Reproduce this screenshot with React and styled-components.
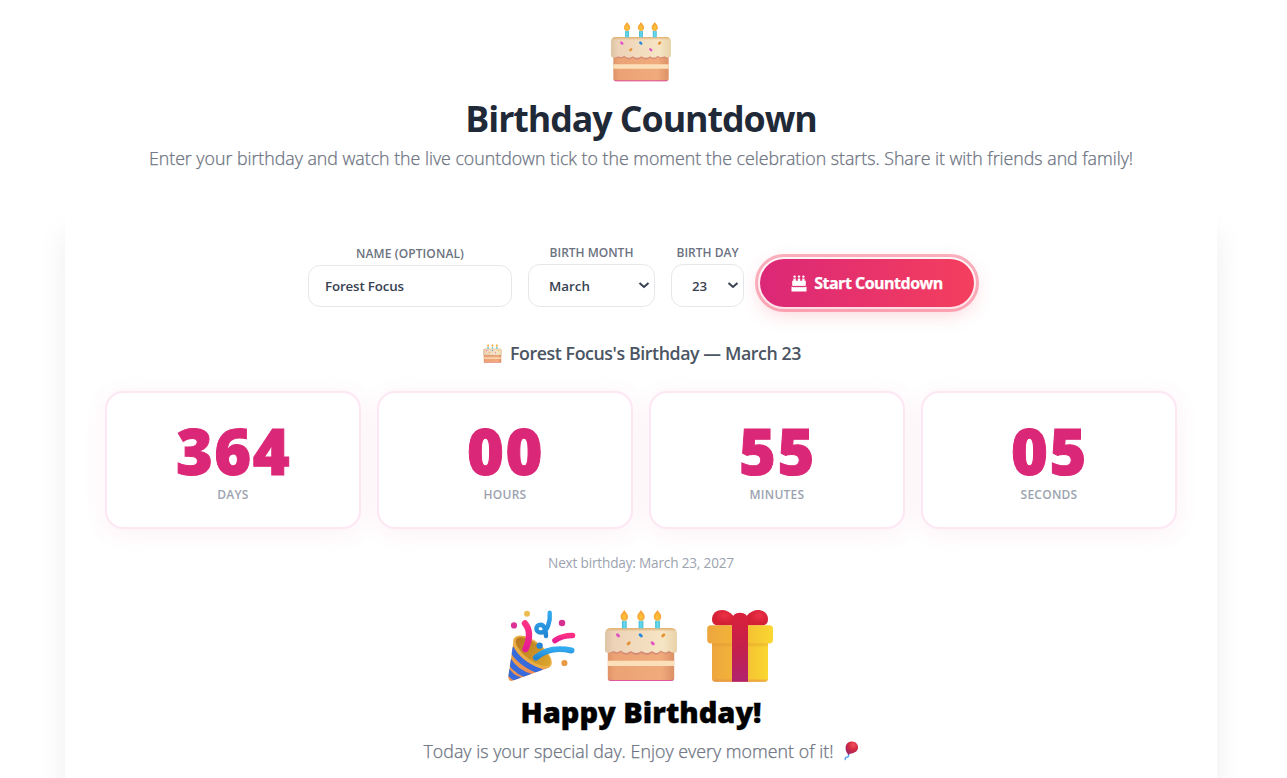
import React from 'react';
import styled, { createGlobalStyle } from 'styled-components';

const Global = createGlobalStyle`
  *, *::before, *::after { box-sizing: border-box; }
  body {
    margin: 0;
    height: 100vh;
    overflow: hidden;
    background: #fff;
    font-family: 'Segoe UI', 'Open Sans', 'Noto Sans', sans-serif;
  }
  h1, h2, p { margin: 0; }
`;

const Page = styled.main`
  width: 1282px;
  height: 100vh;
  overflow: hidden;
  padding: 22px 65px 0;
  display: flex;
  flex-direction: column;
  align-items: center;
`;

const Line = styled.p`
  white-space: nowrap;
  font-size: ${(p) => p.$size}px;
  line-height: ${(p) => p.$line}px;
  font-weight: ${(p) => p.$weight || 400};
  color: ${(p) => p.$color};
  letter-spacing: ${(p) => p.$track || 0}px;
  -webkit-text-stroke: ${(p) => p.$stroke || 0}px currentColor;
  margin-top: ${(p) => p.$top || 0}px;
  display: flex;
  align-items: center;
  justify-content: center;
`;

const Panel = styled.section`
  width: 100%;
  height: 640px;
  flex: none;
  margin-top: 33px;
  padding: 40px;
  border-radius: 8px;
  background: #fff;
  box-shadow: 0 24px 32px -2px rgba(0, 0, 0, 0.08);
  display: flex;
  flex-direction: column;
  align-items: center;
`;

const Form = styled.form`
  display: flex;
  align-items: flex-end;
  gap: 16px;
  height: 62px;
`;

const Field = styled.label`
  display: flex;
  flex-direction: column;
  align-items: center;
  gap: 3px;
  width: ${(p) => p.$width}px;
`;

const FieldName = styled.span`
  font-size: 12px;
  line-height: 17px;
  font-weight: 600;
  letter-spacing: ${(p) => p.$track || 0}px;
  color: #6b7280;
  white-space: nowrap;
`;

const TextInput = styled.input`
  width: 100%;
  height: 42px;
  padding: 0 16px;
  border: 1px solid #e5e7eb;
  border-radius: 12px;
  background: #fff;
  color: #374151;
  font: 600 13.33px 'Segoe UI', 'Open Sans', sans-serif;
  letter-spacing: -0.15px;
`;

const SelectBox = styled.span`
  position: relative;
  display: block;
  width: 100%;
`;

const Select = styled.select`
  appearance: none;
  display: block;
  width: 100%;
  height: 43px;
  padding: 0 0 0 20px;
  border: 1px solid #e5e7eb;
  border-radius: 12px;
  background: #fff;
  color: #374151;
  font: 600 13.33px 'Segoe UI', 'Open Sans', sans-serif;
`;

const Arrow = styled.svg`
  position: absolute;
  right: 5px;
  top: 18px;
  pointer-events: none;
`;

const StartButton = styled.button`
  width: 214px;
  height: 48px;
  padding: 0;
  border: 0;
  border-radius: 24px;
  background: linear-gradient(90deg, #db2777, #f43f5e);
  color: #fff;
  font: 700 16px 'Segoe UI', 'Open Sans', sans-serif;
  letter-spacing: -0.5px;
  -webkit-text-stroke: 0.25px #fff;
  white-space: nowrap;
  outline: 3px solid rgba(244, 63, 94, 0.4);
  outline-offset: 2px;
  box-shadow: 0 6px 20px rgba(244, 63, 94, 0.25);
  display: flex;
  align-items: center;
  justify-content: center;
  gap: 7px;
`;

const Stats = styled.div`
  width: 100%;
  margin-top: 26px;
  display: grid;
  grid-template-columns: repeat(4, 1fr);
  gap: 16px;
`;

const Stat = styled.div`
  height: 138px;
  padding-top: 26px;
  border: 2px solid #fce7f3;
  border-radius: 18px;
  background: #fff;
  box-shadow: 0 4px 24px rgba(219, 39, 119, 0.07);
  text-align: center;
`;

const Digits = styled.div`
  font-size: 63px;
  line-height: 64px;
  font-weight: 800;
  letter-spacing: 1.5px;
  text-indent: 1px;
  color: #db2777;
  -webkit-text-stroke: 1px #db2777;
`;

const Unit = styled.div`
  margin-top: 4px;
  font-size: 12px;
  line-height: 16px;
  font-weight: 600;
  letter-spacing: 0.25px;
  color: #9ca3af;
`;

const Party = styled.div`
  display: flex;
  gap: 28px;
  margin-top: 37px;
`;

const Picture = styled.svg`
  display: block;
  flex: none;
  overflow: visible;
  margin-right: ${(p) => p.$after || 0}px;
  margin-left: ${(p) => p.$before || 0}px;
`;

function Cake({ size, id, after, before }) {
  const sprinkles = [
    [13, 25.3, 45, '#e052c4'],
    [35.7, 25.3, 45, '#2588dc'],
    [58.3, 25.3, -45, '#e59332'],
    [23.7, 33.3, -45, '#e59332'],
    [47.7, 33.3, 45, '#e052c4'],
  ];
  return (
    <Picture width={size} height={size} viewBox="0 0 72 72" $after={after} $before={before} aria-hidden="true">
      <defs>
        <linearGradient id={`${id}-body`}>
          <stop offset="0" stopColor="#df9468" />
          <stop offset=".1" stopColor="#eba274" />
          <stop offset=".8" stopColor="#f0ab7c" />
          <stop offset="1" stopColor="#dc9066" />
        </linearGradient>
        <linearGradient id={`${id}-ice`}>
          <stop offset="0" stopColor="#dcc4a4" />
          <stop offset=".12" stopColor="#edd2b8" />
          <stop offset=".8" stopColor="#f6e5c4" />
          <stop offset="1" stopColor="#e8d2a8" />
        </linearGradient>
        <linearGradient id={`${id}-edge`} x2="0" y2="1">
          <stop offset="0" stopColor="#e2ad6c" />
          <stop offset=".16" stopColor="#e2ad6c" stopOpacity="0" />
        </linearGradient>
        <radialGradient id={`${id}-flame`} cy=".65">
          <stop offset="0" stopColor="#ffc83c" />
          <stop offset="1" stopColor="#f7a034" />
        </radialGradient>
        <linearGradient id={`${id}-wax`}>
          <stop offset="0" stopColor="#44b9d4" />
          <stop offset=".5" stopColor="#6adcf0" />
          <stop offset="1" stopColor="#45b8d6" />
        </linearGradient>
      </defs>
      <path d="M2.8 36H69.2V68.5Q69.2 71 66.7 71H5.3Q2.8 71 2.8 68.5Z" fill={`url(#${id}-body)`} />
      <path d="M3.3 69.3Q4 71 5.8 71H66.2Q68 71 68.7 69.3Q67.5 70 66 70H6Q4.5 70 3.3 69.3Z" fill="#df55a2" />
      <path d="M2.8 50.8H69.2V56H2.8Z" fill="#fbdfb9" />
      <path d="M3 42Q5 44 8.5 42.5Q12 45 16 42Q20 47 26 43Q31 47 36.5 43Q42 47 47 43Q52 47 56 42Q60 45 64 42.5Q67 44 69 42V39H3Z" fill="#cf8174" opacity=".75" />
      <path d="M0 24Q0 18 6 18H66Q72 18 72 24V40Q72 43 69 42.6Q66.5 43 64 41Q60 44 56 40.5Q52 45 47 41Q42 45 36.5 41Q31 45 26 41Q20 45 16 40.5Q12 43.5 8.5 41Q6 43 3 42.6Q0 43 0 40Z" fill={`url(#${id}-ice)`} />
      <path d="M0 24Q0 18 6 18H66Q72 18 72 24V40H0Z" fill={`url(#${id}-edge)`} />
      {[19.3, 36, 52.5].map((x) => (
        <g key={x}>
          <rect x={x - 2.4} y="10.5" width="4.8" height="8" rx="1" fill={`url(#${id}-wax)`} />
          <path d={`M${x} 0C${x + 1} 2 ${x + 3.7} 3.6 ${x + 3.7} 6.7C${x + 3.7} 9.5 ${x + 2} 10.8 ${x} 10.8S${x - 3.7} 9.5 ${x - 3.7} 6.7C${x - 3.7} 3.6 ${x - 1} 2 ${x} 0Z`} fill={`url(#${id}-flame)`} />
        </g>
      ))}
      {sprinkles.map(([x, y, angle, color]) => (
        <rect key={x} x={x - 2.3} y={y - 1.4} width="4.6" height="2.8" rx="1.4" fill={color} transform={`rotate(${angle} ${x} ${y})`} />
      ))}
    </Picture>
  );
}

function Popper() {
  return (
    <Picture width="72" height="72" viewBox="0 0 72 72" aria-hidden="true">
      <defs>
        <linearGradient id="pop-cone" y1="0" x2="1" y2="1">
          <stop offset="0" stopColor="#ecaa3e" />
          <stop offset="1" stopColor="#ee7f63" />
        </linearGradient>
        <linearGradient id="pop-in">
          <stop offset="0" stopColor="#b77720" />
          <stop offset="1" stopColor="#dba52c" />
        </linearGradient>
        <linearGradient id="pop-pink" x2="0" y2="1">
          <stop offset="0" stopColor="#ff2f83" />
          <stop offset="1" stopColor="#e51b93" />
        </linearGradient>
        <linearGradient id="pop-blue" x2="0" y2="1">
          <stop offset="0" stopColor="#32aaf0" />
          <stop offset="1" stopColor="#2386d3" />
        </linearGradient>
        <clipPath id="pop-clip">
          <path d="M9 28L3.3 67Q3.2 71.5 7.5 70.8L44 57.5Z" />
        </clipPath>
      </defs>
      <path d="M9 28L3.3 67Q3.2 71.5 7.5 70.8L44 57.5Z" fill="url(#pop-cone)" />
      <g clipPath="url(#pop-clip)" fill="none" stroke="#376bdc" strokeWidth="5.5">
        <path d="M6 38Q14 54 37 62" />
        <path d="M3 49Q10 62 27 67" />
        <path d="M2 60Q7 68 15 70" />
      </g>
      <ellipse cx="27.5" cy="42" rx="23" ry="10.6" transform="rotate(38 27.5 42)" fill="#e9ae45" />
      <ellipse cx="28" cy="41.6" rx="20.8" ry="8.4" transform="rotate(38 28 41.6)" fill="url(#pop-in)" />
      <g fill="none" strokeLinecap="round">
        <path d="M20 13.5C26.5 21 24 31 20.5 39" stroke="url(#pop-pink)" strokeWidth="6.4" />
        <path d="M31 47.5C42 38 54 38 66.5 40.5" stroke="url(#pop-blue)" strokeWidth="6" />
        <path d="M50 30.5Q57 25.5 67.5 25.5" stroke="url(#pop-pink)" strokeWidth="5.6" />
        <path d="M44.7 2.7C45.5 11 42.5 22.3 36 22.5C29.5 22.3 30.5 14.7 35.5 14.7C40 15 41 20 41 26" stroke="url(#pop-blue)" strokeWidth="4.4" />
      </g>
      <circle cx="22" cy="3.7" r="3" fill="#edbd4f" />
      <circle cx="9" cy="15.4" r="3.1" fill="#dc3196" />
      <circle cx="57" cy="13" r="3.2" fill="#d82f92" />
      <circle cx="34.6" cy="35.6" r="3.2" fill="#2385d3" />
      <circle cx="59.4" cy="53" r="3.1" fill="#e79b47" />
    </Picture>
  );
}

function Gift() {
  return (
    <Picture width="72" height="72" viewBox="0 0 72 72" aria-hidden="true">
      <defs>
        <linearGradient id="gift-box">
          <stop offset="0" stopColor="#eda63e" />
          <stop offset=".4" stopColor="#f2b438" />
          <stop offset=".7" stopColor="#f5c632" />
          <stop offset="1" stopColor="#fbd832" />
        </linearGradient>
        <linearGradient id="gift-low" x2="0" y2="1">
          <stop offset="0" stopColor="#d98a28" stopOpacity=".55" />
          <stop offset=".14" stopColor="#d98a28" stopOpacity="0" />
          <stop offset=".92" stopColor="#e38744" stopOpacity="0" />
          <stop offset="1" stopColor="#e38744" stopOpacity=".7" />
        </linearGradient>
        <linearGradient id="gift-ribbon" x2="0" y2="1">
          <stop offset="0" stopColor="#d9213b" />
          <stop offset=".5" stopColor="#c4204b" />
          <stop offset="1" stopColor="#b1246f" />
        </linearGradient>
        <radialGradient id="gift-bow" cx=".6" cy=".35">
          <stop offset="0" stopColor="#ed3146" />
          <stop offset="1" stopColor="#d32035" />
        </radialGradient>
      </defs>
      <path d="M28 15.5H13Q7 15 7 9.5C7 3 12 0 17 0Q23 0 28 5.5Z" fill="url(#gift-bow)" />
      <path d="M42 15.5H57Q63 15 63 9.5C63 3 58 0 53 0Q47 0 42 5.5Z" fill="url(#gift-bow)" />
      <rect x="7" y="30" width="56" height="41.7" rx="3.5" fill="url(#gift-box)" />
      <rect x="7" y="32" width="56" height="39.7" rx="3.5" fill="url(#gift-low)" />
      <rect x="2.2" y="15.2" width="65.8" height="18.2" rx="3.6" fill="url(#gift-box)" />
      <path d="M27 71.7V10.5Q27 2.7 35 2.7T43 10.5V71.7Z" fill="url(#gift-ribbon)" />
    </Picture>
  );
}

function Balloon() {
  return (
    <Picture width="16" height="20" viewBox="0 0 16 20" $before={9} aria-hidden="true">
      <defs>
        <radialGradient id="balloon-skin" cx=".62" cy=".25" r=".8">
          <stop offset="0" stopColor="#f0525c" />
          <stop offset=".45" stopColor="#d42a42" />
          <stop offset="1" stopColor="#962567" />
        </radialGradient>
      </defs>
      <path d="M5.5 13C5.8 15.5 5.2 16.3 3.6 16.2Q2 16.4 2.3 18.6" fill="none" stroke="#5aa5f5" strokeWidth="1.5" strokeLinecap="round" />
      <path d="M9 .5C13 .5 15 3.5 15 6.5C15 10 12 12 7 12.7L5.5 14L4.5 12.5C3.3 11.5 2.6 9.5 2.6 7C2.6 3 5 .5 9 .5Z" fill="url(#balloon-skin)" />
    </Picture>
  );
}

function CakeGlyph() {
  return (
    <Picture width="16" height="17" viewBox="0 0 16 17" fill="#fff" aria-hidden="true">
      <path d="M2.4 3.4h2.4V7H2.4zM6.8 3.4h2.4V7H6.8zM11.2 3.4h2.4V7h-2.4z" />
      <circle cx="3.6" cy="1.6" r="1.2" />
      <circle cx="8" cy="1.6" r="1.2" />
      <circle cx="12.4" cy="1.6" r="1.2" />
      <path d="M1.2 5.8H14.8V10.5Q13.4 11.7 12.3 10.5Q11.2 11.7 10.1 10.5Q9 11.7 8 10.5Q7 11.7 5.9 10.5Q4.8 11.7 3.7 10.5Q2.6 11.7 1.2 10.5Z" />
      <path d="M.5 11.5Q2.6 12.9 3.7 11.7Q4.8 12.9 5.9 11.7Q7 12.9 8 11.7Q9 12.9 10.1 11.7Q11.2 12.9 12.3 11.7Q13.4 12.9 15.5 11.5V16.5H.5Z" />
    </Picture>
  );
}

function Dropdown({ value }) {
  return (
    <SelectBox>
      <Select defaultValue={value}>
        <option>{value}</option>
      </Select>
      <Arrow width="12" height="7" viewBox="0 0 12 7" fill="none" stroke="#374151" strokeWidth="2" aria-hidden="true">
        <path d="M1.5 1L6 5L10.500 1" />
      </Arrow>
    </SelectBox>
  );
}

const stats = [
  ['364', 'DAYS'],
  ['00', 'HOURS'],
  ['55', 'MINUTES'],
  ['05', 'SECONDS'],
];

export default function App() {
  return (
    <>
      <Global />
      <Page>
        <Cake size={60} id="top" />
        <Line as="h1" $size={35.8} $line={44} $weight={700} $color="#1f2937" $top={14} $track={-1.08}>
          Birthday Countdown
        </Line>
        <Line $size={17.8} $line={28} $color="#6b7280" $top={4} $track={-0.02} $weight={300} $stroke={0.25}>
          Enter your birthday and watch the live countdown tick to the moment the celebration starts. Share it with friends and family!
        </Line>
        <Panel>
          <Form onSubmit={(e) => e.preventDefault()}>
            <Field $width={204}>
              <FieldName $track={0.1}>NAME (OPTIONAL)</FieldName>
              <TextInput defaultValue="Forest Focus" />
            </Field>
            <Field $width={127}>
              <FieldName>BIRTH MONTH</FieldName>
              <Dropdown value="March" />
            </Field>
            <Field $width={73}>
              <FieldName>BIRTH DAY</FieldName>
              <Dropdown value="23" />
            </Field>
            <StartButton type="button">
              <CakeGlyph />
              Start Countdown
            </StartButton>
          </Form>
          <Line $size={17.8} $line={24} $weight={600} $color="#4b5563" $top={34} $track={-0.42}>
            <Cake size={19} id="mini" before={2} after={8} />
            Forest Focus's Birthday — March 23
          </Line>
          <Stats>
            {stats.map(([value, unit]) => (
              <Stat key={unit}>
                <Digits>{value}</Digits>
                <Unit>{unit}</Unit>
              </Stat>
            ))}
          </Stats>
          <Line $size={13.6} $line={20} $color="#9ca3af" $top={24} $track={-0.18}>
            Next birthday: March 23, 2027
          </Line>
          <Party>
            <Popper />
            <Cake size={72} id="big" />
            <Gift />
          </Party>
          <Line as="h2" $size={29} $line={40} $weight={800} $color="#000" $top={10} $stroke={0.4}>
            Happy Birthday!
          </Line>
          <Line $size={17.8} $line={28} $color="#6b7280" $top={5} $track={0.03} $weight={300} $stroke={0.25}>
            Today is your special day. Enjoy every moment of it!
            <Balloon />
          </Line>
        </Panel>
      </Page>
    </>
  );
}
